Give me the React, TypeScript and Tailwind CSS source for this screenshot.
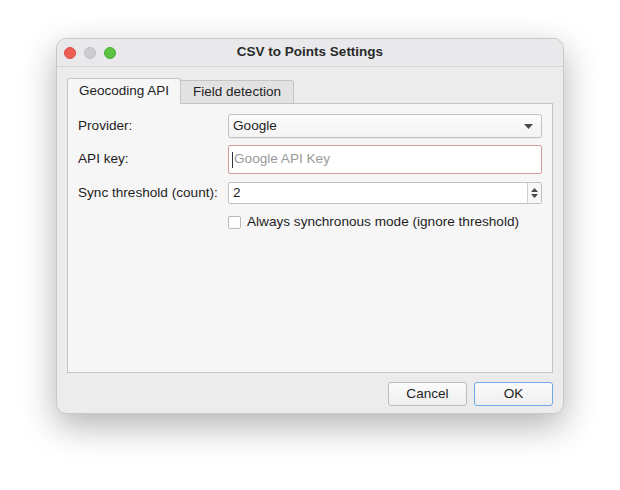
import React from "react";

export default function App() {
  const font = { fontFamily: '"Liberation Sans", Arial, sans-serif' };
  return (
    <div className="w-[620px] h-[490px] bg-white pt-[38px] pl-[56px]" style={font}>
      <div className="w-[508px] h-[376px] rounded-[10px] bg-[#ececec] border border-[#c8c8c8] shadow-[0_12px_34px_rgba(0,0,0,0.3)] flex flex-col overflow-hidden">
        {/* title bar */}
        <div className="h-[28px] shrink-0 bg-[#e9e9ec] border-b border-[#d4d4d6] flex items-center relative">
          <div className="flex items-center gap-[8px] pl-[7px]">
            <div className="w-[12px] h-[12px] rounded-full bg-[#ee5e55] border border-[#d94c44]" />
            <div className="w-[12px] h-[12px] rounded-full bg-[#cdcdd1] border border-[#bdbdc1]" />
            <div className="w-[12px] h-[12px] rounded-full bg-[#5cc244] border border-[#4aab36]" />
          </div>
          <div className="absolute inset-0 flex items-center justify-center text-[13.5px] font-bold text-[#2a2a2a]">
            CSV to Points Settings
          </div>
        </div>
        {/* body */}
        <div className="flex-1 flex flex-col px-[10px] pt-[10px]">
          {/* tabs */}
          <div className="flex items-end h-[26px]">
            <div className="w-[114px] h-[26px] bg-[#f6f6f6] border border-[#c4c4c4] border-b-0 rounded-t-[3px] flex items-center justify-center text-[13.5px] text-[#1e1e1e] relative z-10 mb-[-1px] pb-[1px]">
              Geocoding API
            </div>
            <div className="w-[113px] h-[23px] bg-[#e2e2e2] border border-[#c4c4c4] border-b-0 border-l-0 rounded-tr-[3px] flex items-center justify-center text-[13.5px] text-[#1e1e1e]">
              Field detection
            </div>
          </div>
          {/* pane */}
          <div className="w-[486px] h-[270px] bg-[#f6f6f6] border border-[#c4c4c4] pl-[10px] pr-[10px] pt-[10px] flex flex-col text-[13.6px] text-[#1e1e1e]">
            <div className="flex items-center h-[24px]">
              <div className="w-[150px]">Provider:</div>
              <div className="flex-1 h-[24px] bg-gradient-to-b from-[#fdfdfd] to-[#f3f3f3] border border-[#c2c2c2] rounded-[3px] flex items-center pl-[4px] pr-[8px] shadow-[0_1px_0_rgba(0,0,0,0.05)]">
                <span className="flex-1">Google</span>
                <svg width="9" height="5" viewBox="0 0 9 5"><path d="M0 0 H9 L4.5 5 Z" fill="#4a4a4a" /></svg>
              </div>
            </div>
            <div className="flex items-center h-[29px] mt-[7px]">
              <div className="w-[150px]">API key:</div>
              <div className="flex-1 h-[29px] bg-white border border-[#d29c9c] rounded-[2px] flex items-center pl-[3px]">
                <span className="w-[1px] h-[16px] bg-[#333] mr-[1px]" />
                <span className="text-[#9a9a9a]">Google API Key</span>
              </div>
            </div>
            <div className="flex items-center h-[22px] mt-[8px]">
              <div className="w-[150px]">Sync threshold (count):</div>
              <div className="flex-1 h-[22px] bg-white border border-[#c2c2c2] rounded-[2px] flex items-center">
                <span className="flex-1 pl-[4px]">2</span>
                <div className="w-[14px] h-full border-l border-[#d0d0d0] flex flex-col items-center justify-center gap-[2px] bg-[#f7f7f7]">
                  <svg width="7" height="4" viewBox="0 0 7 4"><path d="M0 4 L3.5 0 L7 4 Z" fill="#4a4a4a" /></svg>
                  <svg width="7" height="4" viewBox="0 0 7 4"><path d="M0 0 H7 L3.5 4 Z" fill="#4a4a4a" /></svg>
                </div>
              </div>
            </div>
            <div className="flex items-center mt-[11px] pl-[150px] h-[14px]">
              <div className="w-[13px] h-[13px] bg-white border border-[#b8b8b8] rounded-[2px]" />
              <span className="ml-[6px]">Always synchronous mode (ignore threshold)</span>
            </div>
          </div>
          {/* buttons */}
          <div className="flex justify-end gap-[7px] mt-[9px]">
            <div className="w-[79px] h-[24px] bg-gradient-to-b from-[#fbfbfb] to-[#eeeeee] border border-[#bdbdbd] rounded-[3px] flex items-center justify-center text-[13.6px] text-[#1e1e1e]">
              Cancel
            </div>
            <div className="w-[79px] h-[24px] bg-gradient-to-b from-[#fbfbfb] to-[#eeeeee] border border-[#6ea8e8] rounded-[3px] flex items-center justify-center text-[13.6px] text-[#1e1e1e]">
              OK
            </div>
          </div>
        </div>
      </div>
    </div>
  );
}
